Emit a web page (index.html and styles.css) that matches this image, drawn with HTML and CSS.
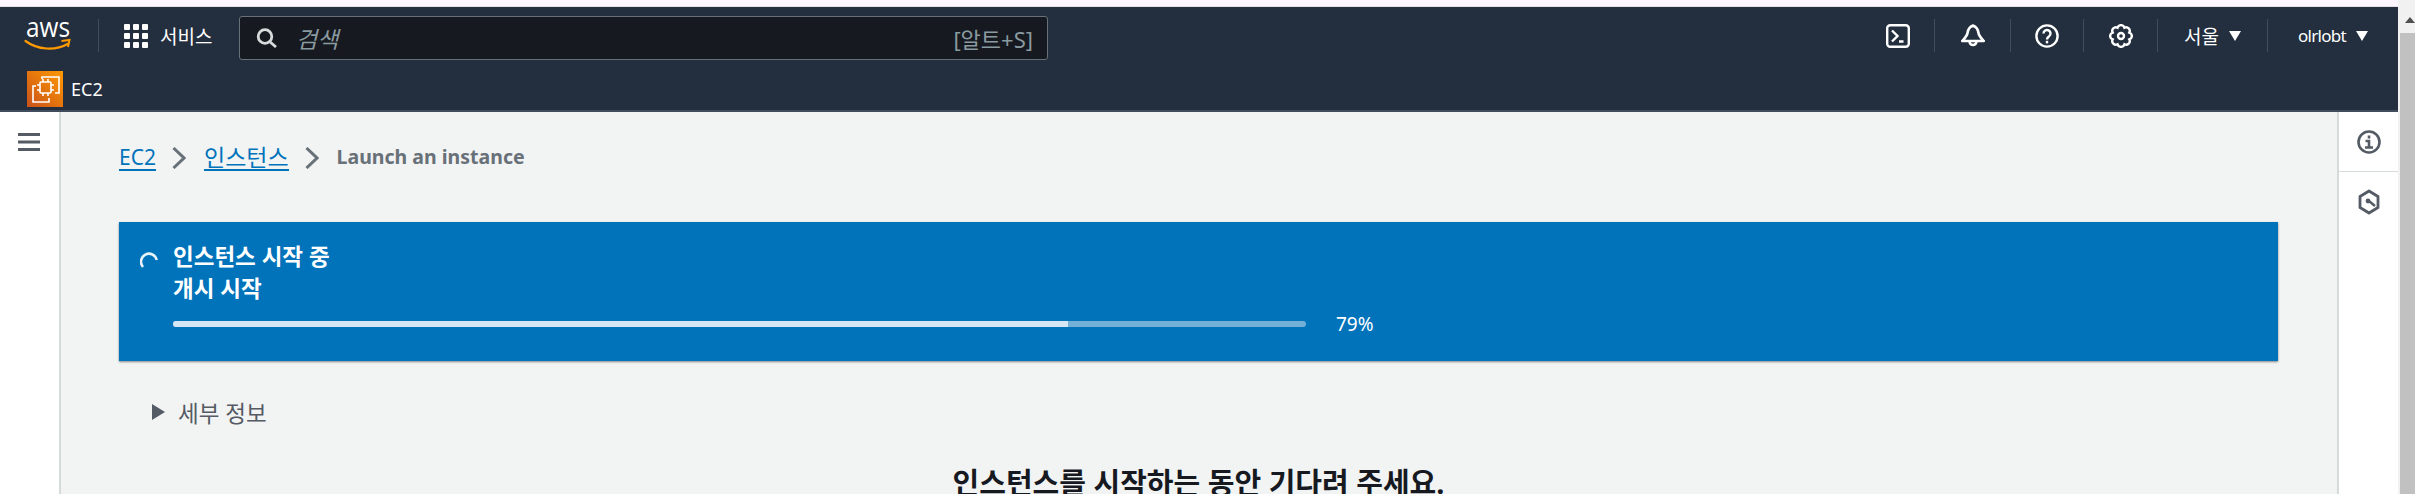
FILE: index.html
```html
<!DOCTYPE html>
<html lang="ko">
<head>
    <meta charset="UTF-8">
    <meta name="viewport" content="width=device-width, initial-scale=1.0">
    <title>Launch an instance | EC2</title>
    <link rel="stylesheet" href="styles.css">
</head>
<body>
    <div class="page">
        <div class="top-strip"></div>

        <header class="nav">
            <div class="nav-row">
                <svg class="aws-logo" viewBox="0 0 46 34" width="46" height="34">
                    <text x="1" y="17.500" textLength="44" lengthAdjust="spacingAndGlyphs" class="aws-word">aws</text>
                    <path d="M0.500 22c12 9 30 10 42 3" fill="none" stroke="#f90" stroke-width="2.200" stroke-linecap="round"/>
                    <path d="M36.500 22l8-1-1.500 7" fill="none" stroke="#f90" stroke-width="2"/>
                </svg>
                <span class="nav-sep sep-logo"></span>
                <div class="services">
                    <svg class="grid-icon" viewBox="0 0 24 24" width="24" height="24" fill="#fff">
                        <rect x="0" y="0" width="6" height="6" rx="1"/><rect x="9" y="0" width="6" height="6" rx="1"/><rect x="18" y="0" width="6" height="6" rx="1"/>
                        <rect x="0" y="9" width="6" height="6" rx="1"/><rect x="9" y="9" width="6" height="6" rx="1"/><rect x="18" y="9" width="6" height="6" rx="1"/>
                        <rect x="0" y="18" width="6" height="6" rx="1"/><rect x="9" y="18" width="6" height="6" rx="1"/><rect x="18" y="18" width="6" height="6" rx="1"/>
                    </svg>
                    <span>서비스</span>
                </div>
                <div class="search">
                    <svg class="search-icon" viewBox="0 0 22 20" width="22" height="20" fill="none" stroke="#d5dbdb" stroke-width="2.800">
                        <circle cx="9" cy="8.500" r="6.800"/><path d="M13.500 13.500l6.500 5.500"/>
                    </svg>
                    <span class="search-hint">검색</span>
                    <span class="search-key">[알트+S]</span>
                </div>
                <div class="nav-right">
                    <div class="nav-item item-shell">
                        <svg viewBox="0 0 24 24" width="24" height="24" fill="none" stroke="#fff" stroke-width="2.400">
                            <rect x="1.200" y="1.200" width="21.600" height="21.600" rx="3"/><path d="M6 6.500l5.500 5.500-5.500 5.500M13 17.500h4.500"/>
                        </svg>
                    </div>
                    <div class="nav-item item-bell">
                        <svg viewBox="0 0 24 24" width="24" height="24" fill="none" stroke="#fff" stroke-width="2.600" stroke-linejoin="round">
                            <path d="M12 1.500c-4 1.500-5 4-5.500 7.500-.4 3-2.500 5-5.300 8h21.600c-2.800-3-4.900-5-5.300-8-.5-3.500-1.500-6-5.500-7.500z"/><path d="M8.500 17.500a3.500 3.500 0 0 0 7 0"/>
                        </svg>
                    </div>
                    <div class="nav-item item-help">
                        <svg viewBox="0 0 24 24" width="24" height="24" fill="none" stroke="#fff" stroke-width="2.400">
                            <circle cx="12" cy="12" r="10.600"/><path d="M8.500 9.500a3.500 3.500 0 1 1 5.600 2.800c-1.400 1-2.100 1.600-2.100 3.200"/><path d="M12 16.800v2.600"/>
                        </svg>
                    </div>
                    <div class="nav-item item-gear">
                        <svg viewBox="0 0 24 24" width="24" height="24" fill="none" stroke="#fff" stroke-width="2.400">
                            <path d="M20.310 8.560A3.600 3.600 0 0 1 20.310 15.440A3.600 3.600 0 0 1 15.440 20.310A3.600 3.600 0 0 1 8.560 20.310A3.600 3.600 0 0 1 3.690 15.440A3.600 3.600 0 0 1 3.690 8.560A3.600 3.600 0 0 1 8.560 3.690A3.600 3.600 0 0 1 15.440 3.690A3.600 3.600 0 0 1 20.310 8.560z"/><circle cx="12" cy="12" r="3"/>
                        </svg>
                    </div>
                    <div class="nav-item item-region"><span>서울</span><i class="caret"></i></div>
                    <div class="nav-item item-user"><span class="user-name">olrlobt</span><i class="caret"></i></div>
                </div>
            </div>
            <div class="nav-row2">
                <span class="ec2-icon">
                    <svg viewBox="0 0 36 36" width="36" height="36" fill="none" stroke="#fff" stroke-width="1.600">
                        <path d="M15 8V6h17v16h-4M9 15H6v16h16v-4"/>
                        <rect x="13" y="11" width="11" height="11" rx="1"/>
                        <path d="M16 8v3M21 8v3M16 22v3M21 22v3M10 14h3M10 19h3M24 14h3M24 19h3"/>
                    </svg>
                </span>
                <span class="ec2-name">EC2</span>
            </div>
        </header>

        <div class="main">
            <aside class="left-rail">
                <svg viewBox="0 0 22 18" width="22" height="18" fill="#545b64">
                    <rect width="22" height="3"/><rect y="7.500" width="22" height="3"/><rect y="15" width="22" height="3"/>
                </svg>
            </aside>

            <main class="content">
                <nav class="crumbs">
                    <a href="#">EC2</a>
                    <svg class="chev" viewBox="0 0 14 22" width="14" height="22"><path d="M1.500 1l10.500 10-10.500 10" fill="none" stroke="#687078" stroke-width="3"/></svg>
                    <a class="crumb-ko" href="#">인스턴스</a>
                    <svg class="chev" viewBox="0 0 14 22" width="14" height="22"><path d="M1.500 1l10.500 10-10.500 10" fill="none" stroke="#687078" stroke-width="3"/></svg>
                    <span class="crumb-now">Launch an instance</span>
                </nav>

                <section class="banner">
                    <svg class="spinner" viewBox="0 0 18 18" width="18" height="18" fill="none" stroke="#e9f3fa" stroke-width="2.600">
                        <path d="M3 17A8 8 0 1 1 16.800 10"/>
                    </svg>
                    <div class="banner-body">
                        <div class="banner-title">인스턴스 시작 중</div>
                        <div class="banner-title">개시 시작</div>
                        <div class="progress-row">
                            <div class="progress"><div class="progress-fill" style="width: 79%"></div></div>
                            <span class="progress-num">79%</span>
                        </div>
                    </div>
                </section>

                <div class="details">
                    <i class="arrow"></i>
                    <span>세부 정보</span>
                </div>

                <h2 class="wait-title">인스턴스를 시작하는 동안 기다려 주세요.</h2>
            </main>

            <aside class="right-rail">
                <div class="rail-btn">
                    <svg viewBox="0 0 24 24" width="24" height="24" fill="none" stroke="#545b64" stroke-width="2.600">
                        <circle cx="12" cy="12" r="10.500"/><path d="M12 5.500v3M8.500 11h3.500v6M8 17.500h8"/>
                    </svg>
                </div>
                <div class="rail-btn">
                    <svg viewBox="0 0 24 26" width="24" height="26" fill="none" stroke="#545b64" stroke-width="2.800" stroke-linejoin="round">
                        <path d="M12 2l9 5.500v11L12 24l-9-5.500v-11z"/><path d="M12 12l6 5" stroke-width="2.400"/><circle cx="11" cy="12" r="2.400" fill="#545b64" stroke="none"/>
                    </svg>
                </div>
            </aside>
        </div>
    </div>

    <div class="scrollbar">
        <i class="scroll-up"></i>
        <div class="scroll-thumb"></div>
    </div>
</body>
</html>
```

FILE: styles.css
```css
* {
    box-sizing: border-box;
}
html, body {
    height: 100%;
}
body {
    margin: 0;
    display: flex;
    overflow: hidden;
    font-family: "Noto Sans", "Noto Sans CJK KR", sans-serif;
    color: #16191f;
    background: #f2f3f3;
}
.page {
    flex: 1;
    min-width: 0;
    display: flex;
    flex-direction: column;
    height: 494px;
    overflow: hidden;
}
.top-strip {
    height: 7px;
    background: #fdf5fd;
    border-bottom: 1px solid #e6dfe6;
}

/* top navigation */
.nav {
    height: 105px;
    flex: none;
    background: #232f3e;
    border-bottom: 2px solid #414d5c;
    color: #fff;
}
.nav-row {
    height: 57px;
    display: flex;
    align-items: center;
    padding-left: 25px;
}
.aws-logo {
    flex: none;
    margin-top: 1px;
    overflow: visible;
}
.aws-word {
    font-family: "Open Sans", sans-serif;
    font-size: 28px;
    fill: #fff;
}
.nav-sep {
    width: 1px;
    height: 33px;
    background: #414d5c;
}
.sep-logo {
    margin: 0 25px 0 27px;
}
.services {
    display: flex;
    align-items: center;
    gap: 12px;
    font-size: 19px;
    width: 115px;
}
.search {
    width: 809px;
    height: 44px;
    margin-top: 4px;
    display: flex;
    align-items: center;
    padding: 0 14px 0 16px;
    background: #16191f;
    border: 1px solid #687078;
    border-radius: 3px;
}
.search-hint {
    margin-left: 18px;
    font-size: 23px;
    font-style: italic;
    color: #8a9ba0;
}
.search-key {
    margin-left: auto;
    font-size: 22px;
    color: #8a9ba0;
}
.nav-right {
    margin-left: auto;
    display: flex;
    align-items: center;
    height: 33px;
}
.nav-item {
    height: 33px;
    display: flex;
    align-items: center;
    justify-content: center;
    border-left: 1px solid #414d5c;
    font-size: 17px;
}
.item-shell {
    width: 88px;
    border-left: none;
    padding-left: 16px;
}
.item-bell {
    width: 76px;
}
.item-help {
    width: 73px;
}
.item-gear {
    width: 74px;
}
.item-region {
    width: 110px;
    font-size: 19px;
}
.item-user {
    width: 131px;
}
.user-name {
    letter-spacing: -0.7px;
}
.caret {
    width: 0;
    height: 0;
    margin-left: 10px;
    border-left: 6px solid transparent;
    border-right: 6px solid transparent;
    border-top: 10px solid #fff;
}
.nav-row2 {
    display: flex;
    align-items: center;
    gap: 8px;
    padding: 7px 0 0 27px;
}
.ec2-icon {
    width: 36px;
    height: 36px;
    display: block;
    background: linear-gradient(45deg, #c8511b, #f90);
}
.ec2-icon svg {
    display: block;
}
.ec2-name {
    font-size: 18px;
}

/* page body */
.main {
    flex: 1;
    min-height: 0;
    display: flex;
}
.left-rail {
    width: 61px;
    flex: none;
    padding: 21px 0 0 18px;
    background: #fff;
    border-right: 2px solid #d5dbdb;
}
.left-rail svg {
    display: block;
}
.content {
    flex: 1;
    min-width: 0;
    padding: 0 59px 0 58px;
}
.crumbs {
    height: 110px;
    padding-top: 30px;
    display: flex;
    align-items: flex-start;
    font-size: 21px;
    line-height: 30px;
}
.crumbs a {
    color: #0073bb;
    text-decoration: none;
    border-bottom: 2px solid #0073bb;
    height: 29px;
}
.crumbs .crumb-ko {
    font-size: 23px;
}
.crumbs .chev {
    margin: 5px 18px 0 16px;
}
.crumb-now {
    font-weight: 700;
    font-size: 19.5px;
    color: #687078;
}
.banner {
    height: 139px;
    display: flex;
    padding: 19px 0 0 21px;
    background: #0073bb;
    box-shadow: 0 1px 2px rgba(0, 0, 0, 0.45);
    color: #fff;
}
.spinner {
    flex: none;
    margin-top: 9px;
}
.banner-body {
    margin-left: 15px;
    flex: 1;
}
.banner-title {
    font-size: 22.5px;
    font-weight: 700;
    line-height: 32px;
}
.progress-row {
    display: flex;
    align-items: center;
    gap: 30px;
    margin-top: 9px;
}
.progress {
    width: 1133px;
    height: 6px;
    border-radius: 3px;
    background: #73b0d8;
    overflow: hidden;
}
.progress-fill {
    height: 100%;
    background: #d5e7f4;
}
.progress-num {
    font-size: 19px;
    line-height: 20px;
}
.details {
    display: flex;
    align-items: center;
    margin: 36px 0 0 33px;
    height: 30px;
    font-size: 22.5px;
    color: #545b64;
}
.arrow {
    width: 0;
    height: 0;
    margin-right: 13px;
    border-top: 8px solid transparent;
    border-bottom: 8px solid transparent;
    border-left: 13px solid #545b64;
}
.wait-title {
    margin: 36px 0 0;
    font-size: 29px;
    line-height: 40px;
    font-weight: 700;
    text-align: center;
}

/* right help rail */
.right-rail {
    width: 61px;
    flex: none;
    background: #fff;
    border-left: 2px solid #d5dbdb;
}
.rail-btn {
    height: 60px;
    display: flex;
    align-items: center;
    justify-content: center;
    border-bottom: 1px solid #d5dbdb;
}
.rail-btn:last-child {
    border-bottom: none;
}

/* browser scrollbar */
.scrollbar {
    width: 17px;
    flex: none;
    height: 494px;
    padding-top: 17px;
    background: #f1f1f1;
}
.scroll-up {
    display: block;
    width: 0;
    height: 0;
    margin-left: 7px;
    border-left: 5px solid transparent;
    border-right: 5px solid transparent;
    border-bottom: 6px solid #505050;
}
.scroll-thumb {
    height: 461px;
    margin: 10px 0 0 2px;
    background: #c1c1c1;
}
```
